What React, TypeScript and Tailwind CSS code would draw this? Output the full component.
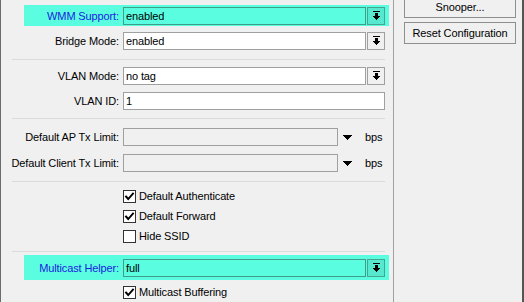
import React from "react";

const font = { fontFamily: '"Liberation Sans", Arial, sans-serif' };

function DropIcon() {
  return (
    <svg width="9" height="10" viewBox="0 0 9 10" shapeRendering="crispEdges">
      <rect x="1" y="0" width="7" height="1" fill="#000" />
      <rect x="3" y="2" width="3" height="3" fill="#000" />
      <rect x="1" y="5" width="7" height="1" fill="#000" />
      <rect x="2" y="6" width="5" height="1" fill="#000" />
      <rect x="3" y="7" width="3" height="1" fill="#000" />
      <rect x="4" y="8" width="1" height="1" fill="#000" />
    </svg>
  );
}

function Tri() {
  return (
    <svg width="10" height="5" viewBox="0 0 10 5" shapeRendering="crispEdges">
      <rect x="0" y="0" width="9" height="1" fill="#000" />
      <rect x="1" y="1" width="7" height="1" fill="#000" />
      <rect x="2" y="2" width="5" height="1" fill="#000" />
      <rect x="3" y="3" width="3" height="1" fill="#000" />
      <rect x="4" y="4" width="1" height="1" fill="#000" />
    </svg>
  );
}

function Check({ checked }: { checked: boolean }) {
  return (
    <div className="w-[13px] h-[13px] border border-[#333] bg-white flex items-center justify-center shrink-0">
      {checked && (
        <svg width="11" height="11" viewBox="0 0 11 11">
          <path d="M2 5.5 L4.2 8 L9 2.5" stroke="#000" strokeWidth="1.9" fill="none" strokeLinecap="square" />
        </svg>
      )}
    </div>
  );
}

function Separator() {
  return <div className="ml-[11px] w-[373px] h-px bg-[#dadada]" />;
}

function Label({ text, blue }: { text: string; blue?: boolean }) {
  return (
    <div
      className={`w-[119px] shrink-0 text-right pr-[1px] leading-[18px] ${blue ? "text-[#1c1ce0]" : "text-black"}`}
    >
      {text}
    </div>
  );
}

function ComboRow({ label, value, hl }: { label: string; value: string; hl?: boolean }) {
  return (
    <div className="flex h-[18px]">
      <Label text={label} blue={hl} />
      <div className="w-[3px] shrink-0" />
      <div
        className={`w-[243px] h-[18px] border pl-[2px] leading-[16px] ${
          hl ? "border-[#3e9e88] bg-[#5bfde0]" : "border-[#a0a0a0] bg-white"
        }`}
      >
        {value}
      </div>
      <div
        className={`ml-px w-[18px] h-[18px] border flex items-center justify-center ${
          hl ? "border-[#45a58f] bg-[#56e9cf]" : "border-[#a0a0a0] bg-[#f0f0f0]"
        }`}
      >
        <DropIcon />
      </div>
    </div>
  );
}

function TxRow({ label }: { label: string }) {
  return (
    <div className="flex h-[18px] items-center">
      <Label text={label} />
      <div className="w-[3px] shrink-0" />
      <div className="w-[215px] h-[18px] border border-[#a0a0a0] bg-[#f0f0f0]" />
      <div className="ml-[5px] w-[10px] flex items-center">
        <Tri />
      </div>
      <div className="ml-[12px] leading-[18px]">bps</div>
    </div>
  );
}

function CheckRow({ label, checked }: { label: string; checked: boolean }) {
  return (
    <div className="flex items-center h-[13px] ml-[122px]">
      <Check checked={checked} />
      <span className="ml-[3px] leading-[13px]">{label}</span>
    </div>
  );
}

export default function App() {
  return (
    <div
      className="w-[524px] h-[302px] overflow-hidden bg-[#f0f0f0] flex text-[11px] tracking-[-0.12px] text-black"
      style={font}
    >
      <div className="w-px h-full bg-[#6b6b6b] shrink-0" />
      <div className="w-[392px] shrink-0 flex flex-col">
        <div className="mt-[5px] ml-[23px] w-[365px] h-[21px] bg-[#5bfde0] pt-[2px]">
          <div className="-ml-[23px]">
            <ComboRow label="WMM Support:" value="enabled" hl />
          </div>
        </div>
        <div className="mt-[6px]">
          <ComboRow label="Bridge Mode:" value="enabled" />
        </div>
        <div className="mt-[9px]">
          <Separator />
        </div>
        <div className="mt-[7px]">
          <ComboRow label="VLAN Mode:" value="no tag" />
        </div>
        <div className="mt-[7px] flex h-[18px]">
          <Label text="VLAN ID:" />
          <div className="w-[3px] shrink-0" />
          <div className="w-[262px] h-[18px] border border-[#a0a0a0] bg-white pl-[2px] leading-[16px]">1</div>
        </div>
        <div className="mt-[8px]">
          <Separator />
        </div>
        <div className="mt-[9px]">
          <TxRow label="Default AP Tx Limit:" />
        </div>
        <div className="mt-[8px]">
          <TxRow label="Default Client Tx Limit:" />
        </div>
        <div className="mt-[9px]">
          <Separator />
        </div>
        <div className="mt-[8px]">
          <CheckRow label="Default Authenticate" checked />
        </div>
        <div className="mt-[7px]">
          <CheckRow label="Default Forward" checked />
        </div>
        <div className="mt-[7px]">
          <CheckRow label="Hide SSID" checked={false} />
        </div>
        <div className="mt-[8px]">
          <Separator />
        </div>
        <div className="mt-[3px] ml-[23px] w-[365px] h-[25px] bg-[#5bfde0] pt-[4px]">
          <div className="-ml-[23px]">
            <ComboRow label="Multicast Helper:" value="full" hl />
          </div>
        </div>
        <div className="mt-[6px]">
          <CheckRow label="Multicast Buffering" checked />
        </div>
      </div>
      <div className="w-px h-full bg-[#a0a0a0] shrink-0" />
      <div className="w-[128px] shrink-0 flex flex-col pl-[10px] -mt-[4px]">
        <div className="w-[112px] h-[22px] border border-[#8f8f8f] bg-[#f0f0f0] flex items-center justify-center">
          Snooper...
        </div>
        <div className="mt-[4px] w-[112px] h-[22px] border border-[#8f8f8f] bg-[#f0f0f0] flex items-center justify-center">
          Reset Configuration
        </div>
      </div>
      <div className="w-[2px] h-full bg-[#555] shrink-0" />
    </div>
  );
}
